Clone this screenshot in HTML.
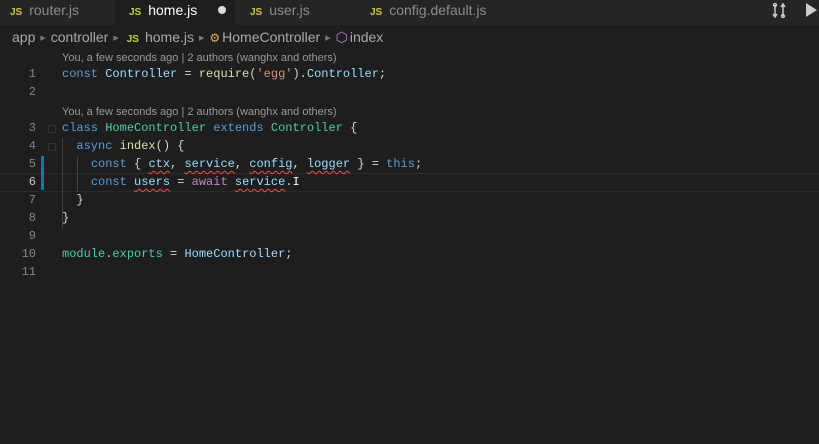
<!DOCTYPE html>
<html><head><style>
body{margin:0;width:819px;height:444px;background:#1e1e1e;overflow:hidden;font-family:"Liberation Sans",sans-serif;position:relative}
.tabs{position:absolute;left:0;top:0;width:819px;height:25px;background:#252526}
.tab{position:absolute;top:0;height:25px;line-height:21px;font-size:14px;color:#8b8b8b}
.tab b{font-size:10px;color:#cbcb41;font-weight:bold;margin-right:7px}
.bc{position:absolute;top:29px;left:12px;font-size:14px;color:#a9a9a9;line-height:17px;white-space:nowrap}
.bc .s{font-size:7px;color:#777;margin:0 5px;vertical-align:2px}
.code{position:absolute;left:0;top:0;font-family:"Liberation Mono",monospace;font-size:12px}
.ln{position:absolute;left:0;width:36px;text-align:right;color:#858585;height:18px;line-height:18px}
.l{position:absolute;left:62px;white-space:pre;height:18px;line-height:18px;color:#d4d4d4}
.lens{position:absolute;left:62px;font-family:"Liberation Sans",sans-serif;font-size:11px;color:#999;line-height:14px;white-space:nowrap}
.k{color:#569cd6}.c{color:#4ec9b0}.v{color:#9cdcfe}.f{color:#dcdcaa}.s1{color:#ce9178}.p{color:#c586c0}
.w{text-decoration:underline wavy #f14c4c;text-decoration-thickness:1px;text-underline-offset:3px}
</style></head><body>
<div class="tabs">
<div class="tab" style="left:0;width:115px"><span style="margin-left:10px"><b>JS</b>router.js</span></div>
<div class="tab" style="left:115px;width:120px;background:#1e1e1e;color:#fff;height:26px"><span style="margin-left:14px"><b>JS</b>home.js</span><span style="position:absolute;left:103px;top:6px;width:8px;height:8px;border-radius:50%;background:#ddd"></span></div>
<div class="tab" style="left:235px;width:120px"><span style="margin-left:15px"><b>JS</b>user.js</span></div>
<div class="tab" style="left:355px;width:180px"><span style="margin-left:15px"><b>JS</b>config.default.js</span></div>
<svg style="position:absolute;left:771px;top:2px" width="16" height="17" viewBox="0 0 16 17" fill="none" stroke="#ccc" stroke-width="1.5"><path d="M4 3v11M2 12l2 3 2-3M12 14V3M10 5l2-3 2 3"/><circle cx="4" cy="3" r="1.4"/><circle cx="12" cy="14" r="1.4"/></svg>
<svg style="position:absolute;left:805px;top:3px" width="12" height="14"><path d="M1 0L12 7 1 14Z" fill="#ccc"/></svg>
</div>
<div class="bc">app<span class="s">▶</span>controller<span class="s">▶</span><b style="font-size:10px;color:#cbcb41;margin-right:6px;margin-left:3px">JS</b>home.js<span class="s">▶</span><span style="color:#e8ab53;font-size:12px;margin-right:2px">⚙</span>HomeController<span class="s">▶</span><span style="color:#b180d7;margin-right:2px">⬡</span>index</div>
<div style="position:absolute;left:0;top:173px;width:819px;height:17px;border-top:1px solid #2a2a2a;border-bottom:1px solid #2a2a2a"></div>
<div style="position:absolute;left:41px;top:156px;width:3px;height:34px;background:#0c7d9d"></div>
<div style="position:absolute;left:62px;top:138px;width:1px;height:90px;background:#404040"></div>
<div style="position:absolute;left:77px;top:156px;width:1px;height:36px;background:#404040"></div>
<div style="position:absolute;left:48px;top:125px;width:6px;height:6px;border:1px solid #333"></div>
<div style="position:absolute;left:48px;top:143px;width:6px;height:6px;border:1px solid #333"></div>
<div class="code">
<div class="lens" style="top:51px">You, a few seconds ago | 2 authors (wanghx and others)</div>
<div class="lens" style="top:105px">You, a few seconds ago | 2 authors (wanghx and others)</div>
<div class="ln" style="top:65px">1</div><div class="l" style="top:65px"><span class="k">const</span> <span class="v">Controller</span> = <span class="f">require</span>(<span class="s1">'egg'</span>).<span class="v">Controller</span>;</div>
<div class="ln" style="top:83px">2</div>
<div class="ln" style="top:119px">3</div><div class="l" style="top:119px"><span class="k">class</span> <span class="c">HomeController</span> <span class="k">extends</span> <span class="c">Controller</span> {</div>
<div class="ln" style="top:137px">4</div><div class="l" style="top:137px">  <span class="k">async</span> <span class="f">index</span>() {</div>
<div class="ln" style="top:155px">5</div><div class="l" style="top:155px">    <span class="k">const</span> { <span class="v w">ctx</span>, <span class="v w">service</span>, <span class="v w">config</span>, <span class="v w">logger</span> } = <span class="k">this</span>;</div>
<div class="ln" style="top:173px;color:#c6c6c6">6</div><div class="l" style="top:173px">    <span class="k">const</span> <span class="v w">users</span> = <span class="p">await</span> <span class="v w">service</span>.<span style="color:#fff">I</span></div>
<div class="ln" style="top:191px">7</div><div class="l" style="top:191px">  }</div>
<div class="ln" style="top:209px">8</div><div class="l" style="top:209px">}</div>
<div class="ln" style="top:227px">9</div>
<div class="ln" style="top:245px">10</div><div class="l" style="top:245px"><span class="c">module</span>.<span class="c">exports</span> = <span class="v">HomeController</span>;</div>
<div class="ln" style="top:263px">11</div>
</div>
</body></html>
